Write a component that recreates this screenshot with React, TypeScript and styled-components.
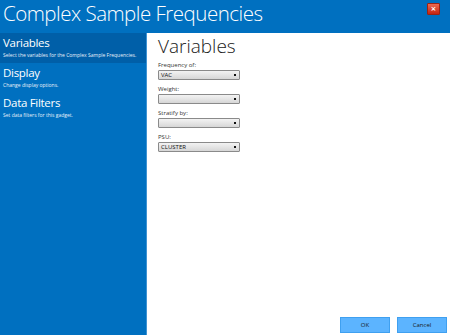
import React from "react";
import styled, { createGlobalStyle } from "styled-components";

const Global = createGlobalStyle`
  html, body { margin: 0; padding: 0; background: #ffffff; }
  body { font-family: "Open Sans", "Noto Sans", sans-serif; }
`;

const Window = styled.div`
  width: 450px;
  height: 335px;
  display: flex;
  flex-direction: column;
  background: #0070c0;
  overflow: hidden;
`;

const Header = styled.div`
  height: 33px;
  flex: 0 0 33px;
  display: flex;
  align-items: flex-start;
  justify-content: space-between;
  background: #0070c0;
  color: #ffffff;
`;

const Title = styled.div`
  font-family: "Open Sans", "Noto Sans", sans-serif;
  font-weight: 300;
  font-size: 20.5px;
  line-height: 27px;
  padding-left: 3px;
  letter-spacing: -0.5px;
  white-space: nowrap;
`;

const CloseBtn = styled.div`
  width: 13px;
  height: 12px;
  margin: 3px 10px 0 0;
  background: linear-gradient(#ee6a50, #c42412);
  border: 1px solid #9a2214;
  border-radius: 1px;
  box-sizing: border-box;
  display: flex;
  align-items: center;
  justify-content: center;
  color: #ffffff;
  font-size: 7px;
  font-weight: 700;
  line-height: 1;
  font-family: "DejaVu Sans", sans-serif;
`;

const Body = styled.div`
  flex: 1;
  display: flex;
  min-height: 0;
`;

const Sidebar = styled.div`
  width: 146px;
  flex: 0 0 146px;
  background: #0070c0;
  border-right: 1px solid #3f93d3;
  display: flex;
  flex-direction: column;
`;

const NavItem = styled.div<{ $active?: boolean }>`
  height: 30px;
  padding: 2px 0 0 3px;
  box-sizing: border-box;
  background: ${(p) => (p.$active ? "#005fa8" : "transparent")};
  color: #ffffff;
`;

const NavTitle = styled.div`
  font-family: "Open Sans", "Noto Sans", sans-serif;
  font-size: 11.5px;
  line-height: 16px;
  font-weight: 400;
  letter-spacing: -0.3px;
`;

const NavDesc = styled.div`
  font-family: "Open Sans", "Noto Sans", sans-serif;
  font-size: 5px;
  line-height: 9px;
  color: #e8f1fa;
  white-space: nowrap;
`;

const Content = styled.div`
  flex: 1;
  background: #ffffff;
  display: flex;
  flex-direction: column;
  padding: 0 0 0 11px;
`;

const Heading = styled.div`
  font-family: "Open Sans", "Noto Sans", sans-serif;
  font-weight: 300;
  font-size: 19px;
  line-height: 24px;
  color: #202020;
  margin-top: 1px;
  margin-bottom: 3px;
`;

const Field = styled.div`
  display: flex;
  flex-direction: column;
  margin-bottom: 5px;
`;

const Label = styled.div`
  font-family: "Open Sans", "Noto Sans", sans-serif;
  font-size: 6px;
  line-height: 8px;
  color: #333333;
  margin-bottom: 1px;
`;

const Select = styled.div`
  width: 82px;
  height: 10px;
  box-sizing: border-box;
  border: 1px solid #8a8a8a;
  border-radius: 1px;
  background: linear-gradient(#f3f3f3, #e5e5e5 50%, #d6d6d6);
  display: flex;
  align-items: center;
  justify-content: space-between;
  padding: 0 2px 0 2px;
  font-family: "Open Sans", "Noto Sans", sans-serif;
  font-size: 6px;
  color: #111111;
`;

const Arrow = styled.span`
  width: 2px;
  height: 2px;
  background: #111111;
  margin-right: 1px;
`;

const Footer = styled.div`
  margin-top: auto;
  display: flex;
  justify-content: flex-end;
  gap: 7px;
  padding: 0 3px 2px 0;
`;

const Button = styled.div`
  width: 50px;
  height: 16px;
  box-sizing: border-box;
  background: #5cb4ff;
  border: 1px solid #3fa0f0;
  display: flex;
  align-items: center;
  justify-content: center;
  font-family: "Open Sans", "Noto Sans", sans-serif;
  font-size: 6px;
  color: #1a1a1a;
`;

const fields = [
  { label: "Frequency of:", value: "VAC" },
  { label: "Weight:", value: "" },
  { label: "Stratify by:", value: "" },
  { label: "PSU:", value: "CLUSTER" },
];

const nav = [
  { title: "Variables", desc: "Select the variables for the Complex Sample Frequencies.", active: true },
  { title: "Display", desc: "Change display options." },
  { title: "Data Filters", desc: "Set data filters for this gadget." },
];

export default function App() {
  return (
    <>
      <Global />
      <Window>
        <Header>
          <Title>Complex Sample Frequencies</Title>
          <CloseBtn>×</CloseBtn>
        </Header>
        <Body>
          <Sidebar>
            {nav.map((n) => (
              <NavItem key={n.title} $active={n.active}>
                <NavTitle>{n.title}</NavTitle>
                <NavDesc>{n.desc}</NavDesc>
              </NavItem>
            ))}
          </Sidebar>
          <Content>
            <Heading>Variables</Heading>
            {fields.map((f) => (
              <Field key={f.label}>
                <Label>{f.label}</Label>
                <Select>
                  <span>{f.value}</span>
                  <Arrow />
                </Select>
              </Field>
            ))}
            <Footer>
              <Button>OK</Button>
              <Button>Cancel</Button>
            </Footer>
          </Content>
        </Body>
      </Window>
    </>
  );
}
